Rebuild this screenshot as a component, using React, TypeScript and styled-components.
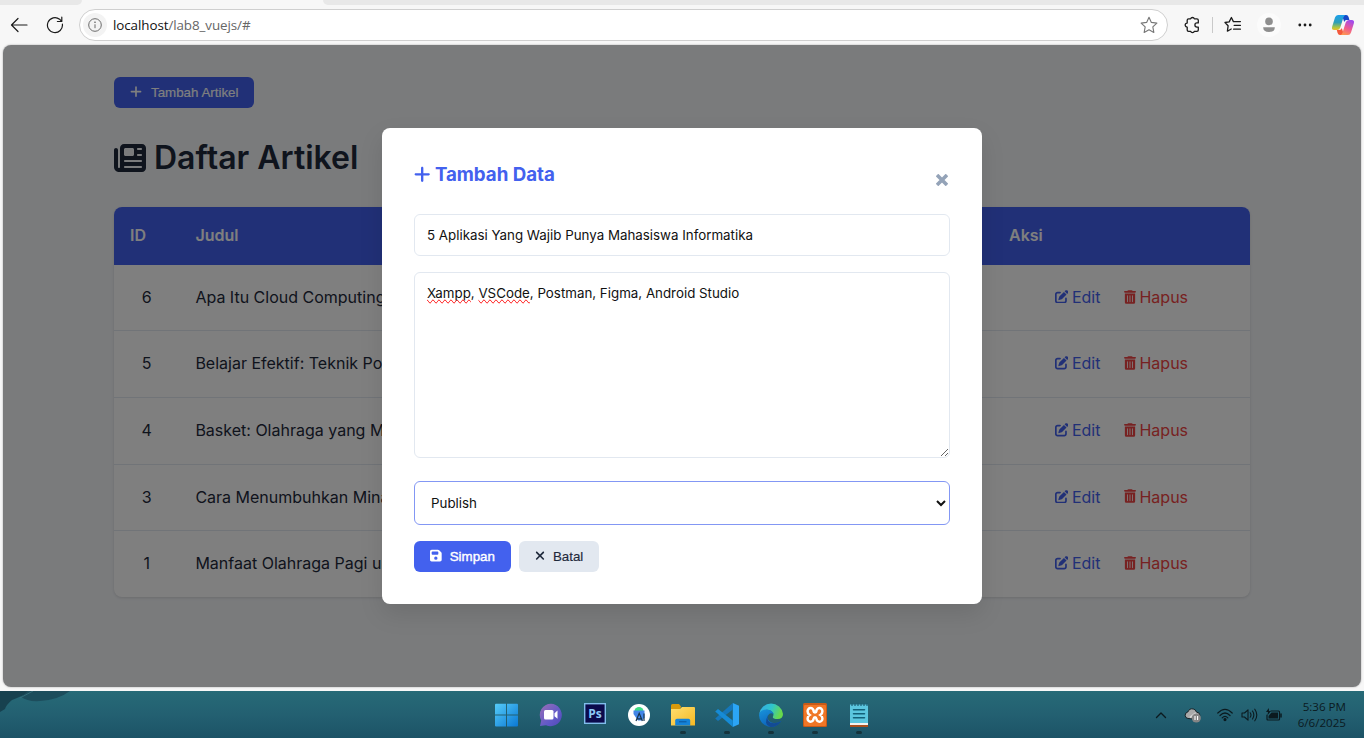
import React from 'react';
import styled, { createGlobalStyle } from 'styled-components';
import { FaPlus, FaNewspaper, FaPenToSquare, FaTrashCan, FaFloppyDisk, FaXmark } from 'react-icons/fa6';

const GlobalStyle = createGlobalStyle`
  *, *::before, *::after { box-sizing: border-box; }
  body { margin: 0; background: #f7f7f7; overflow: hidden; }
`;

const Screen = styled.div`
  width: 1364px;
  height: 738px;
  display: flex;
  flex-direction: column;
  background: #f7f7f7;
  overflow: hidden;
`;

/* ---------- browser chrome ---------- */

const TabStrip = styled.div`
  height: 5px;
  flex: none;
  display: flex;
  justify-content: space-between;
`;

const TabEdge = styled.div<{ $side: 'left' | 'right' }>`
  background: #e8e8e8;
  width: ${(p) => (p.$side === 'left' ? '82px' : '1041px')};
  border-radius: ${(p) => (p.$side === 'left' ? '0 0 6px 0' : '0 0 0 6px')};
`;

const Toolbar = styled.div`
  height: 40px;
  flex: none;
  display: flex;
  align-items: center;
  padding: 0 3px 0 9px;
`;

const ToolButton = styled.div<{ $width: number }>`
  width: ${(p) => p.$width}px;
  height: 32px;
  flex: none;
  display: flex;
  align-items: center;
  justify-content: center;
`;

const AddressBar = styled.div`
  width: 1089px;
  height: 32px;
  margin-left: -2px;
  flex: none;
  display: flex;
  align-items: center;
  padding: 0 9px 0 3px;
  border: 1px solid #cfcfcf;
  border-radius: 16px;
  background: #fff;
`;

const SiteInfo = styled.div`
  width: 24px;
  height: 24px;
  border-radius: 50%;
  background: #f3f3f3;
  display: flex;
  align-items: center;
  justify-content: center;
`;

const Url = styled.div`
  flex: 1;
  margin-left: 6px;
  font: 13.4px/20px 'Open Sans', 'Noto Sans', sans-serif;
  letter-spacing: -0.08px;
  color: #666;
  b { font-weight: 400; color: #111; }
`;

const Divider = styled.div`
  width: 1px;
  height: 16px;
  flex: none;
  margin-left: -4px;
  background: #c9c9c9;
`;

/* ---------- page ---------- */

const Viewport = styled.div`
  position: relative;
  height: 642px;
  margin: 0 3px 4px;
  flex: none;
  border-radius: 8px;
  overflow: hidden;
  background: #f4f6f9;
  box-shadow: 0 0 2px rgba(0, 0, 0, 0.35);
  font-family: Inter, 'Open Sans', sans-serif;
  font-size: 16px;
  line-height: 1.6;
  color: #1e293b;
`;

const Container = styled.main`
  width: 1200px;
  margin: 0 auto;
  padding: 32px;
`;

const Button = styled.button<{ $variant?: 'primary' | 'muted'; $strong?: boolean }>`
  display: flex;
  align-items: center;
  height: 31px;
  gap: 8px;
  padding: 0 16px 1px;
  border: 0;
  border-radius: 6px;
  font: 500 13.33px/15px 'Liberation Sans', Arial, sans-serif;
  white-space: nowrap;
  -webkit-text-stroke: ${(p) => (p.$strong ? '0.4px' : '0.15px')} currentColor;
  color: ${(p) => (p.$variant === 'muted' ? '#1e293b' : '#fff')};
  background: ${(p) => (p.$variant === 'muted' ? '#e2e8f0' : '#4361ee')};
  svg { flex: none; }
`;

const AddButton = styled(Button)`
  width: 140px;
  gap: 9px;
`;

const PageTitle = styled.h1`
  display: flex;
  align-items: center;
  gap: 8px;
  height: 51.2px;
  margin: 24px 0;
  font-size: 32px;
  font-weight: 600;
  line-height: 51.2px;
`;

const Table = styled.div`
  border-radius: 8px;
  overflow: hidden;
  background: #fff;
  box-shadow: 0 1px 3px rgba(0, 0, 0, 0.12);
`;

const Row = styled.div`
  display: grid;
  grid-template-columns: 65.4px 1fr 257px;
  border-bottom: 1px solid #e2e8f0;
  &:last-child { border-bottom: 0; }
`;

const HeadRow = styled(Row)`
  background: #4361ee;
  color: #fff;
  font-weight: 600;
  border-bottom: 0;
`;

const HeadCell = styled.div`
  padding: 16px;
`;

const Cell = styled.div<{ $center?: boolean }>`
  padding: 20px 16px;
  white-space: nowrap;
  text-align: ${(p) => (p.$center ? 'center' : 'left')};
`;

const Actions = styled(Cell)`
  display: flex;
  justify-content: center;
  gap: 24px;
`;

const Action = styled.a<{ $danger?: boolean }>`
  display: inline-flex;
  align-items: center;
  gap: ${(p) => (p.$danger ? 3 : 3.5)}px;
  color: ${(p) => (p.$danger ? '#ef4444' : '#4361ee')};
  svg { margin-top: -2px; }
`;

/* ---------- modal ---------- */

const Overlay = styled.div`
  position: absolute;
  inset: 0;
  display: flex;
  align-items: center;
  justify-content: center;
  background: rgba(0, 0, 0, 0.5);
`;

const Modal = styled.form`
  width: 600px;
  height: 476px;
  padding: 32px;
  display: flex;
  flex-direction: column;
  border-radius: 8px;
  background: #fff;
  box-shadow: 0 10px 25px rgba(0, 0, 0, 0.1);
`;

const ModalHeader = styled.header`
  display: flex;
  justify-content: space-between;
  height: 54px;
  flex: none;
`;

const ModalTitle = styled.h3`
  display: flex;
  align-items: center;
  gap: 4.5px;
  height: 29px;
  margin: 0;
  font-size: 18.72px;
  font-weight: 700;
  letter-spacing: -0.02px;
  color: #4361ee;
`;

const CloseButton = styled.span`
  width: 16px;
  height: 40px;
  display: flex;
  align-items: center;
  justify-content: center;
`;

const TextField = styled.input`
  height: 42px;
  padding: 0 12px;
  border: 1px solid #e2e8f0;
  border-radius: 6px;
  font: 13.33px Inter, sans-serif;
  color: #111;
`;

const TextArea = styled.div`
  height: 186px;
  margin: 16px 0 23px;
  padding: 12px;
  border: 1px solid #e2e8f0;
  border-radius: 6px;
  overflow: auto;
  resize: vertical;
  font: 13.33px/16px Inter, sans-serif;
  color: #111;
`;

const Misspelled = styled.span`
  text-decoration-line: spelling-error;
`;

const Select = styled.select`
  height: 44px;
  padding: 0 12px;
  border: 1px solid #8397f4;
  border-radius: 6px;
  background: #fff;
  font: 13.33px Inter, sans-serif;
  color: #111;
`;

const ButtonRow = styled.div`
  display: flex;
  gap: 8px;
  margin-top: 16px;
`;

/* ---------- taskbar ---------- */

const Taskbar = styled.footer`
  height: 47px;
  flex: none;
  display: grid;
  grid-template-columns: 485px 1fr auto;
  background: linear-gradient(#276a77, #236071 50%, #1c5366);
`;

const AppRow = styled.div`
  display: flex;
`;

const AppIcon = styled.div<{ $running?: boolean }>`
  width: 44px;
  height: 47px;
  display: flex;
  flex-direction: column;
  align-items: center;
  padding-top: 12px;
  &::after {
    content: '';
    width: 6px;
    height: 3px;
    margin-top: 4px;
    border-radius: 2px;
    background: ${(p) => (p.$running ? '#15333c' : 'transparent')};
  }
`;

const Tray = styled.div`
  display: flex;
  align-items: center;
  padding-right: 18px;
`;

const TrayIcon = styled.div<{ $width: number }>`
  width: ${(p) => p.$width}px;
  height: 47px;
  display: flex;
  align-items: center;
  justify-content: center;
`;

const Clock = styled.div`
  width: 57px;
  text-align: right;
  white-space: nowrap;
  font: 11.6px/16px 'Open Sans', 'Noto Sans', sans-serif;
  color: #0b1a1f;
`;

const stroke = { fill: 'none', stroke: '#1b1b1b', strokeWidth: 1.2, strokeLinecap: 'round', strokeLinejoin: 'round' } as const;

const STAR = 'M8 1.2 10.1 5.7 15 6.3 11.4 9.7 12.3 14.6 8 12.2 3.7 14.6 4.6 9.7 1 6.3 5.9 5.7Z';

const articles = [
  { id: 6, title: 'Apa Itu Cloud Computing' },
  { id: 5, title: 'Belajar Efektif: Teknik Pom' },
  { id: 4, title: 'Basket: Olahraga yang Men' },
  { id: 3, title: 'Cara Menumbuhkan Minat' },
  { id: 1, title: 'Manfaat Olahraga Pagi un' },
];

function BrowserBar() {
  return (
    <>
      <TabStrip>
        <TabEdge $side="left" />
        <TabEdge $side="right" />
      </TabStrip>
      <Toolbar>
        <ToolButton $width={20}>
          <svg width="18" height="16" viewBox="0 0 18 16" {...stroke}><path d="M17 8H1.5M8 1.5 1.5 8 8 14.5" /></svg>
        </ToolButton>
        <ToolButton $width={52}>
          <svg width="18" height="18" viewBox="0 0 18 18" {...stroke} strokeWidth={1.2}><path d="M16.4 8.2A7.5 7.5 0 1 1 13.6 3.2L15.6 5.3M15.8 1.2V5.5H11.4" /></svg>
        </ToolButton>
        <AddressBar>
          <SiteInfo>
            <svg width="14" height="14" viewBox="0 0 14 14" fill="none" stroke="#6b6b6b"><circle cx="7" cy="7" r="6.3" /><path d="M7 6.3V10.2" /><circle cx="7" cy="4.2" r=".4" fill="#6b6b6b" /></svg>
          </SiteInfo>
          <Url><b>localhost</b>/lab8_vuejs/#</Url>
          <svg width="18" height="18" viewBox="0 0 16 16" {...stroke} stroke="#777" strokeWidth={1}><path d={STAR} /></svg>
        </AddressBar>
        <ToolButton $width={48}>
          <svg width="16" height="18" viewBox="0 0 16 18" {...stroke} strokeWidth={1.3}>
            <path d="M4.6 2.9H6.6A2 2 0 0 1 10.4 2.9H12.9Q14.3 2.9 14.3 4.3V6.9H13A2.1 2.1 0 0 0 13 11.1H14.3V13.9Q14.3 15.3 12.9 15.3H10.4A2 2 0 0 1 6.6 15.3H4.6Q3.2 15.3 3.2 13.9V11.1A2 2 0 0 1 3.2 7.1V4.3Q3.2 2.9 4.6 2.9Z" />
          </svg>
        </ToolButton>
        <Divider />
        <ToolButton $width={40}>
          <svg width="18" height="18" viewBox="0 0 18 18" {...stroke} strokeWidth={1.3}>
            <path d="M9.4 5.6 7.4 1.5 5.2 5.9 1 6.5 4.1 9.8 3.4 15.2 7.2 13M9.4 5.6H16.4M10.2 9.4H16.4M9.6 13.2H16.4" />
          </svg>
        </ToolButton>
        <ToolButton $width={32}>
          <svg width="24" height="24" viewBox="0 0 24 24"><circle cx="12" cy="12" r="12" fill="#fbfbfb" /><circle cx="12" cy="8.4" r="3.8" fill="#8e8e8e" /><path d="M6.2 14.2H17.8Q18 19 12 19T6.2 14.2Z" fill="#8e8e8e" /></svg>
        </ToolButton>
        <ToolButton $width={40}>
          <svg width="14" height="4" viewBox="0 0 14 4" fill="#1b1b1b"><circle cx="1.8" cy="2" r="1.4" /><circle cx="7" cy="2" r="1.4" /><circle cx="12.2" cy="2" r="1.4" /></svg>
        </ToolButton>
        <ToolButton $width={36}>
          <svg width="24" height="22" viewBox="0 0 24 22">
            <defs>
              <linearGradient id="cpA" x1="0" y1="0" x2="0" y2="1"><stop offset="0" stopColor="#1ba0ec" /><stop offset=".5" stopColor="#2f9fb8" /><stop offset=".85" stopColor="#b5c73c" /><stop offset="1" stopColor="#f0b927" /></linearGradient>
              <linearGradient id="cpB" x1=".6" y1="0" x2=".2" y2="1"><stop offset="0" stopColor="#a24bec" /><stop offset=".5" stopColor="#ee5a92" /><stop offset="1" stopColor="#ff9a4c" /></linearGradient>
            </defs>
            <path d="M11 1H15.2Q17 1 17.6 3L18.4 6H15.5Q13.8 6 13.2 8Z" fill="#1648c8" />
            <path d="M7 1H14.5Q13 1.5 12.4 3.5L9.3 13.5Q8.5 16 6 16H3.2Q.2 16 1.2 12.5L4 3.5Q4.8 1 7 1Z" fill="url(#cpA)" />
            <path d="M13 21H9Q7.2 21 6.6 19L5.8 16H8.5Q10.2 16 10.8 14Z" fill="#f4593c" />
            <path d="M17 21H9.5Q11 20.5 11.6 18.5L14.7 8.5Q15.5 6 18 6H20.8Q23.8 6 22.8 9.5L20 18.5Q19.2 21 17 21Z" fill="url(#cpB)" />
          </svg>
        </ToolButton>
      </Toolbar>
    </>
  );
}

function ArticlePage() {
  return (
    <Container>
      <AddButton><FaPlus size={13.33} style={{ width: 12 }} />Tambah Artikel</AddButton>
      <PageTitle><FaNewspaper />Daftar Artikel</PageTitle>
      <Table>
        <HeadRow>
          <HeadCell>ID</HeadCell>
          <HeadCell>Judul</HeadCell>
          <HeadCell>Aksi</HeadCell>
        </HeadRow>
        {articles.map((a) => (
          <Row key={a.id}>
            <Cell $center>{a.id}</Cell>
            <Cell>{a.title}</Cell>
            <Actions>
              <Action><FaPenToSquare size={13.5} />Edit</Action>
              <Action $danger><FaTrashCan size={14} style={{ width: 12 }} />Hapus</Action>
            </Actions>
          </Row>
        ))}
      </Table>
    </Container>
  );
}

function ArticleModal() {
  return (
    <Overlay>
      <Modal>
        <ModalHeader>
          <ModalTitle><FaPlus size={18.72} style={{ width: 16.4 }} />Tambah Data</ModalTitle>
          <CloseButton>
            <svg width="12" height="12" viewBox="0 0 12 12" fill="none" stroke="#94a3b8" strokeWidth="3.6"><path d="M1 1 11 11M11 1 1 11" /></svg>
          </CloseButton>
        </ModalHeader>
        <TextField readOnly value="5 Aplikasi Yang Wajib Punya Mahasiswa Informatika" />
        <TextArea>
          <Misspelled>Xampp</Misspelled>, <Misspelled>VSCode</Misspelled>, Postman, Figma, Android Studio
        </TextArea>
        <Select defaultValue="1"><option value="1">Publish</option></Select>
        <ButtonRow>
          <Button type="button" $strong><FaFloppyDisk size={13.33} style={{ width: 11.7 }} />Simpan</Button>
          <Button type="button" $variant="muted"><FaXmark size={13.33} style={{ width: 10 }} />Batal</Button>
        </ButtonRow>
      </Modal>
    </Overlay>
  );
}

const ink = { fill: 'none', stroke: '#0b1a1f', strokeWidth: 1.2, strokeLinecap: 'round', strokeLinejoin: 'round' } as const;

function DesktopTaskbar() {
  return (
    <Taskbar>
      <svg width="90" height="24" viewBox="0 0 90 24">
        <path d="M0 0H32Q20 6 12 9Q6 14 5 18L0 21Z" fill="#17414f" />
        <path d="M28 0H70Q58 9 40 10Q28 11 21 6Z" fill="#1d4d5c" />
        <path d="M33 0 20 7" stroke="#3b7380" strokeWidth=".8" />
      </svg>
      <AppRow>
        <AppIcon>
          <svg width="24" height="24" viewBox="0 0 24 24">
            <defs><linearGradient id="win" x1="0" y1="0" x2="1" y2="1"><stop offset="0" stopColor="#56ccf8" /><stop offset="1" stopColor="#0a78d4" /></linearGradient></defs>
            <path d="M.7.7H11V11.5H0V1.4ZM12 .7H22.3L23 1.4V11.5H12ZM0 12.5H11V23.4H.7L0 22.7ZM12 12.5H23V22.7L22.3 23.4H12Z" fill="url(#win)" />
          </svg>
        </AppIcon>
        <AppIcon>
          <svg width="24" height="24" viewBox="0 0 24 24">
            <defs><linearGradient id="chat" x1="0" y1="0" x2="1" y2="1"><stop offset="0" stopColor="#9a6fb5" /><stop offset=".6" stopColor="#625ac8" /><stop offset="1" stopColor="#5048b8" /></linearGradient></defs>
            <path d="M12 .8A11.2 11.2 0 1 1 7 22.2L1 23 2.2 17.5A11.2 11.2 0 0 1 12 .8Z" fill="url(#chat)" />
            <rect x="5" y="7" width="9.5" height="9.5" rx="1.5" fill="#fff" /><path d="M15.5 10.3 18.5 7.6V15.8L15.5 13.2Z" fill="#fff" />
          </svg>
        </AppIcon>
        <AppIcon>
          <svg width="24" height="24" viewBox="0 0 24 24">
            <rect x="1.7" y=".7" width="20.6" height="19.6" fill="#0b0a4c" stroke="#80bdec" strokeWidth="1.4" />
            <text x="12" y="14.8" textAnchor="middle" fontFamily="Open Sans, sans-serif" fontWeight="700" fontSize="12" fill="#8cc8f5">Ps</text>
          </svg>
        </AppIcon>
        <AppIcon>
          <svg width="24" height="24" viewBox="0 0 24 24">
            <circle cx="12" cy="12" r="11" fill="#fff" />
            <path d="M7.5 8A4.5 4 0 0 1 16.5 8Z" fill="#3ddc84" /><path d="M6.5 7.5H17.5V14.5L15 17.5H11L6.5 11Z" fill="#4285e8" />
            <path d="M9 18 12.2 10.3 15.4 18M10 15.8H14.4M17 10.5V18" fill="none" stroke="#17344d" strokeWidth="1.2" />
          </svg>
        </AppIcon>
        <AppIcon $running>
          <svg width="26" height="24" viewBox="0 0 26 24">
            <defs><linearGradient id="fold" x1="0" y1="0" x2="1" y2="1"><stop offset="0" stopColor="#ffdf70" /><stop offset="1" stopColor="#f5b822" /></linearGradient></defs>
            <path d="M1 2.5Q1 1 2.5 1H9L11 3.5L10 7H1Z" fill="#d99a0c" />
            <path d="M1 6H10L12 4H24Q25 4 25 5V22.5H1Z" fill="url(#fold)" />
            <path d="M5.2 22.5V17.5Q5.2 15.8 7 15.8H18.5Q20.2 15.8 20.2 17.5V22.5Z" fill="#1583d8" /><path d="M9 18.8H16.5" stroke="#0a559c" />
          </svg>
        </AppIcon>
        <AppIcon $running>
          <svg width="24" height="24" viewBox="0 0 24 24">
            <path d="M17.8 0 24 2.8V21.2L17.8 24Z" fill="#2ba5f5" /><path d="M17.8 0V6.4L3 18 .2 15.6Z" fill="#1577bb" /><path d="M17.8 24V17.6L3 6 .2 8.4Z" fill="#168bd6" />
          </svg>
        </AppIcon>
        <AppIcon $running>
          <svg width="24" height="24" viewBox="0 0 24 24">
            <defs>
              <linearGradient id="edA" x1="0" y1="0" x2="1" y2=".3"><stop offset="0" stopColor="#35a8e8" /><stop offset=".55" stopColor="#2fc4cc" /><stop offset="1" stopColor="#68d94c" /></linearGradient>
              <linearGradient id="edB" x1="0" y1="0" x2=".6" y2="1"><stop offset="0" stopColor="#1894dc" /><stop offset="1" stopColor="#0c5eb6" /></linearGradient>
            </defs>
            <path d="M.2 11A12 12 0 0 1 24 11Q24 16 18.5 16T14 13.5Q15.5 10 12 7.8Q6 4.5.2 11Z" fill="url(#edA)" />
            <path d="M0 12Q1 6.5 7.5 6.4Q13.5 6.6 15 11.5Q11.5 8.5 9 12.5Q7.5 18.5 14.5 20Q19 20.5 22.4 17.8A12 12 0 0 1 0 12Z" fill="url(#edB)" />
            <path d="M9 12.2Q6.8 20.5 15.5 20.2Q19.5 20 22.2 18Q18.5 24 11.5 24Q4 21 9 12.2Z" fill="#134b94" />
          </svg>
        </AppIcon>
        <AppIcon $running>
          <svg width="24" height="24" viewBox="0 0 24 24">
            <rect width="24" height="24" rx="1.5" fill="#c85a18" /><rect x="1" y="2" width="22" height="21" rx="1" fill="#f07626" />
            <path d="M12 9.6Q10.8 9.6 10.6 8A3 3 0 0 0 4.6 8.2Q4.6 10.6 6.6 12Q4.6 13.2 4.6 15.6A3 3 0 0 0 10.6 15.8Q10.8 14.2 12 14.2T13.4 15.8A3 3 0 0 0 19.4 15.6Q19.4 13.2 17.4 12Q19.4 10.6 19.4 8.2A3 3 0 0 0 13.4 8Q13.2 9.6 12 9.6Z" fill="none" stroke="#fff" strokeWidth="2.5" />
          </svg>
        </AppIcon>
        <AppIcon $running>
          <svg width="24" height="24" viewBox="0 0 24 24">
            <rect x="3" y="20" width="18" height="4" fill="#a8501e" /><rect x="3" y="19" width="18" height="3" fill="#f4f2ee" />
            <rect x="3" y="1.5" width="18" height="18.5" fill="#5bc6df" />
            <path d="M5 0V3M8 0V3M11 0V3M14 0V3M17 0V3M20 0V3" stroke="#1d6076" strokeWidth="1.2" />
            <path d="M6.5 6.7H17.5M6.5 10.7H17.5M6.5 14.7H17.5" stroke="#126079" strokeWidth="1.5" strokeLinecap="round" />
          </svg>
        </AppIcon>
      </AppRow>
      <Tray>
        <TrayIcon $width={32}><svg width="12" height="8" viewBox="0 0 12 8" {...ink} strokeWidth={1.4}><path d="M1.5 6.5 6 2 10.5 6.5" /></svg></TrayIcon>
        <TrayIcon $width={32}>
          <svg width="18" height="16" viewBox="0 0 18 16">
            <path d="M4 11.5A3.3 3.3 0 0 1 3.8 5Q5.5 1 9.3 2Q11.8 2.5 12.4 5Q16 5.5 16 8.5L10 12Z" fill="#aaa" stroke="#152126" strokeWidth="1" /><path d="M6 10.5 12 6" stroke="#d7d7d7" strokeWidth="2" />
            <circle cx="12.3" cy="11" r="4.6" fill="#858585" /><path d="M11 9V13M13.6 9V13" stroke="#fff" strokeWidth="1.1" />
          </svg>
        </TrayIcon>
        <TrayIcon $width={32}>
          <svg width="16" height="14" viewBox="0 0 16 14" {...ink}><path d="M.8 5Q8-2.2 15.2 5M3 7.5Q8 2.5 13 7.5M5.2 9.8Q8 7 10.8 9.8" /><circle cx="8" cy="11.6" r="1" fill="#0b1a1f" /></svg>
        </TrayIcon>
        <TrayIcon $width={17}>
          <svg width="17" height="14" viewBox="0 0 17 14" {...ink} strokeWidth={1.1}><path d="M1 5H3.5L7 1.8V12.2L3.5 9H1ZM9.2 4.8Q10.8 7 9.2 9.2M11.5 3Q14.2 7 11.5 11M13.8 1.2Q17.8 7 13.8 12.8" /></svg>
        </TrayIcon>
        <TrayIcon $width={31}>
          <svg width="17" height="14" viewBox="0 0 17 14" {...ink}><path d="M6 3H13.5Q14.5 3 14.5 4V11Q14.5 12 13.5 12H3Q2 12 2 11V7" /><path d="M6.5 4.5H13V10.5H3.5V8Z" fill="#0b1a1f" stroke="none" /><path d="M16 6V9" strokeWidth="1.5" /><path d="M3.8 0 1 4H3L2.5 7.2 6 3H4Z" fill="#0b1a1f" stroke="none" /></svg>
        </TrayIcon>
        <Clock>5:36 PM<br />6/6/2025</Clock>
      </Tray>
    </Taskbar>
  );
}

export default function App() {
  return (
    <Screen>
      <GlobalStyle />
      <BrowserBar />
      <Viewport>
        <ArticlePage />
        <ArticleModal />
      </Viewport>
      <DesktopTaskbar />
    </Screen>
  );
}
